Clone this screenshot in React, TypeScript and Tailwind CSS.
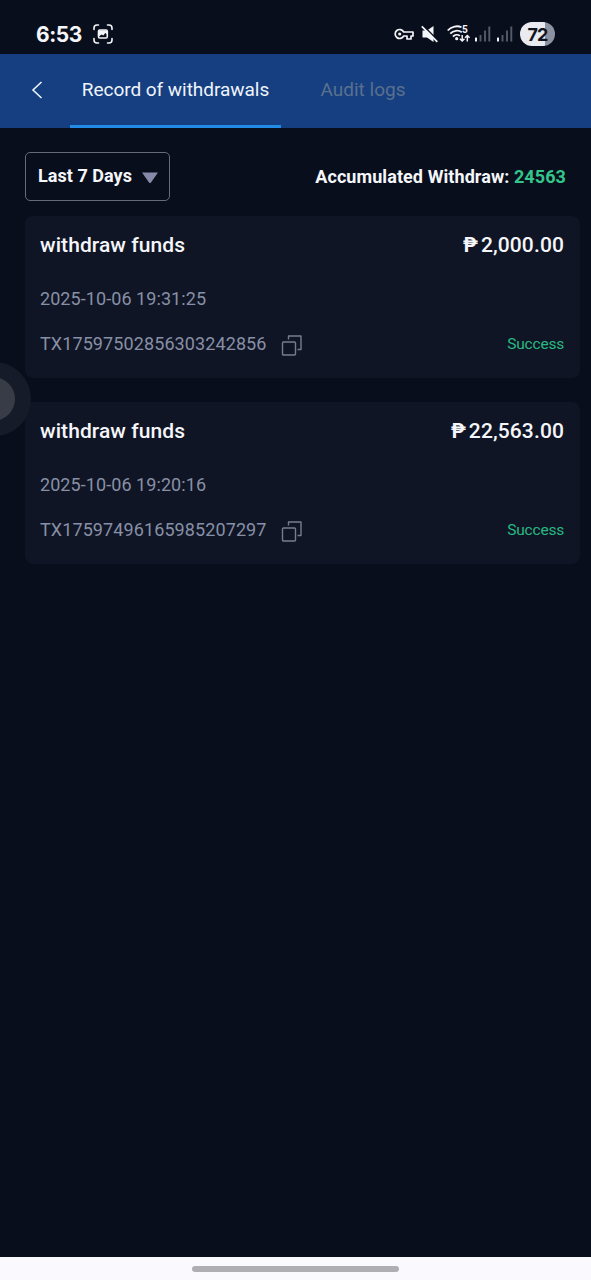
import React from "react";

type Withdrawal = { amount: string; date: string; tx: string };

const records: Withdrawal[] = [
  { amount: "2,000.00", date: "2025-10-06 19:31:25", tx: "TX17597502856303242856" },
  { amount: "22,563.00", date: "2025-10-06 19:20:16", tx: "TX17597496165985207297" },
];

function CaptureIcon() {
  return (
    <svg width="20" height="20" viewBox="0 0 20 20" fill="none" stroke="#f4f5f8" strokeWidth="1.600" strokeLinecap="round">
      <path d="M1 5.500V4a3 3 0 0 1 3-3h1.500M14.500 1H16a3 3 0 0 1 3 3v1.500M19 14.500V16a3 3 0 0 1-3 3h-1.500M5.500 19H4a3 3 0 0 1-3-3v-1.500" />
      <rect x="5.500" y="6" width="8.800" height="8" rx="1.300" />
      <path d="M5.500 6.500h8.800v4l-2-1.500-2 2.500-1.500-1-3.300 2z" fill="#f4f5f8" stroke="none" />
    </svg>
  );
}

function KeyIcon() {
  return (
    <svg width="20" height="14" viewBox="0 0 20 14" fill="none" stroke="#f4f5f8" strokeWidth="1.700" strokeLinejoin="round">
      <path d="M9.700 5A4.500 4.500 0 1 0 9.700 9H13v3h4V9h2V5Z" />
      <circle cx="5.700" cy="7" r="1.600" fill="#f4f5f8" stroke="none" />
    </svg>
  );
}

function MuteIcon() {
  return (
    <svg width="18" height="18" viewBox="0 0 18 18">
      <path d="M1.500 5.500H6L12.500 1v16L6 12.500H1.500z" fill="#f4f5f8" />
      <path d="M1.800.200l16 16" stroke="#080e1c" strokeWidth="1.500" />
      <path d="M.800 1.300l15.500 15.500" stroke="#f4f5f8" strokeWidth="1.800" />
    </svg>
  );
}

function WifiIcon() {
  return (
    <svg width="24" height="18" viewBox="0 0 24 18" fill="none" stroke="#f4f5f8" strokeWidth="1.800">
      <path d="M.700 5.500C4.500 1.200 10.500.300 14.500 2.300M3.300 8.700c3-3.400 8-3.900 11.500-1.500M5.900 11.600c2-2.100 5-2.300 7-.700" />
      <circle cx="9.700" cy="13.700" r="1.600" fill="#f4f5f8" stroke="none" />
      <path d="M15.200 10v6m-2.300-2.300 2.300 2.300 2.300-2.300M20.300 16.500v-6m-2.300 2.300 2.300-2.300 2.300 2.300" strokeWidth="1.500" />
      <text x="15" y="8.300" fontSize="10" fontWeight="700" fontFamily="Roboto, sans-serif" fill="#f4f5f8" stroke="none">5</text>
    </svg>
  );
}

function SignalIcon() {
  return (
    <svg width="16" height="16" viewBox="0 0 16 16">
      <rect x="0" y="11.500" width="2" height="4" rx=".500" fill="#f4f5f8" />
      <path d="M5.500 9v6.500M10 4.500v11M14.300.500v15" stroke="#555b69" strokeWidth="1.900" />
    </svg>
  );
}

function CopyIcon() {
  return (
    <svg width="21" height="21" viewBox="0 0 21 21" fill="none" stroke="#747d90" strokeWidth="1.400" strokeLinejoin="round" className="ml-[14px] mt-[4px]">
      <rect x="1.500" y="7" width="13" height="13" rx="1" />
      <path d="M7.500 4.500V1H20v13.500h-3.500" />
    </svg>
  );
}

function RecordCard({ record }: { record: Withdrawal }) {
  return (
    <article className="flex h-[162px] flex-col rounded-lg bg-[#101525] pl-[15px] pr-4">
      <div className="flex h-[57px] items-center justify-between pt-[3px] text-[21px] font-medium text-[#f5f6fa]">
        <span className="tracking-[0.07px]">withdraw funds</span>
        <span className="flex items-center gap-[3px]">
          <b className="pb-[2px] text-[20px] font-bold">₱</b>
          <span className="tracking-[0.12px]">{record.amount}</span>
        </span>
      </div>
      <div className="flex h-[50px] items-center text-[18px] tracking-[0.07px] text-[#8790a5]">{record.date}</div>
      <div className="flex h-10 items-center">
        <span className="pt-px text-[18px] tracking-[0.1px] text-[#8790a5]">{record.tx}</span>
        <CopyIcon />
        <span className="ml-auto pt-1 text-[15.5px] tracking-[-0.2px] text-[#28b982]">Success</span>
      </div>
    </article>
  );
}

export default function App() {
  return (
    <main className="relative flex h-[1280px] w-[591px] flex-col overflow-hidden bg-[#080e1c] font-['Roboto',sans-serif]">
      <header className="flex h-[54px] items-center pl-9 pr-9 pt-[14px]">
        <span className="w-[47px] pt-px font-['Inter',sans-serif] text-[21px] font-bold tracking-[-0.4px] text-[#f5f6fa]">6:53</span>
        <span className="ml-[10px]"><CaptureIcon /></span>
        <div className="ml-auto flex items-center">
          <KeyIcon />
          <span className="ml-[7px]"><MuteIcon /></span>
          <span className="ml-2"><WifiIcon /></span>
          <span className="ml-1"><SignalIcon /></span>
          <span className="ml-[6px]"><SignalIcon /></span>
          <span className="ml-[7px] flex h-6 w-[35px] items-center justify-center rounded-full bg-[linear-gradient(90deg,#e9ebf1_72%,#8c92a0_72%)] font-['Inter',sans-serif] text-[18px] font-bold tracking-[-0.8px] text-[#101520]">72</span>
        </div>
      </header>

      <nav className="flex h-[74px] bg-[#153f80] text-[19px]">
        <button className="flex w-[70px] items-center pl-[31px] pb-[2px]" aria-label="Back">
          <svg width="12" height="18" viewBox="0 0 12 18" fill="none" stroke="#eef3fc" strokeWidth="1.600"><path d="M10.500 1 2 9l8.500 8" /></svg>
        </button>
        <button className="flex w-[211px] items-center justify-center border-b-[3px] border-[#218be6] pt-px tracking-[-0.04px] text-[#f0f4fc]">Record of withdrawals</button>
        <button className="ml-[28px] flex w-[108px] items-center justify-center pb-[2px] text-[#5a708f]">Audit logs</button>
      </nav>

      <section className="flex flex-1 flex-col pl-[25px] pr-[11px] pt-6">
        <div className="mb-[14px] flex h-[50px] items-start justify-between pr-[14px] text-[18px] font-bold text-[#f5f6fa]">
          <button className="flex h-[49px] w-[145px] items-center rounded-[5px] border border-[#656b79] pb-[2px] pl-3">
            <span className="tracking-[0.04px]">Last 7 Days</span>
            <svg width="18" height="12" viewBox="0 0 18 12" className="ml-[9px] mt-1"><path d="M1 .500h16L10 10.500q-1 1-2 0z" fill="#858aa8" /></svg>
          </button>
          <p className="pt-[11px] tracking-[0.08px]">Accumulated Withdraw: <span className="text-[#34c58b]">24563</span></p>
        </div>
        <div className="flex flex-col gap-6">
          {records.map((record) => <RecordCard key={record.tx} record={record} />)}
        </div>
      </section>

      <footer className="flex h-[23px] items-center justify-center bg-[#f9f9fe]">
        <span className="h-[6px] w-[207px] rounded-full bg-[#afafb3]" />
      </footer>

      <div className="absolute left-[-43px] top-[362px] flex h-[74px] w-[74px] items-center justify-center rounded-full bg-[#151b28]">
        <span className="h-[44px] w-[44px] translate-x-[-1px] rounded-full bg-[#373c47]" />
      </div>
    </main>
  );
}
